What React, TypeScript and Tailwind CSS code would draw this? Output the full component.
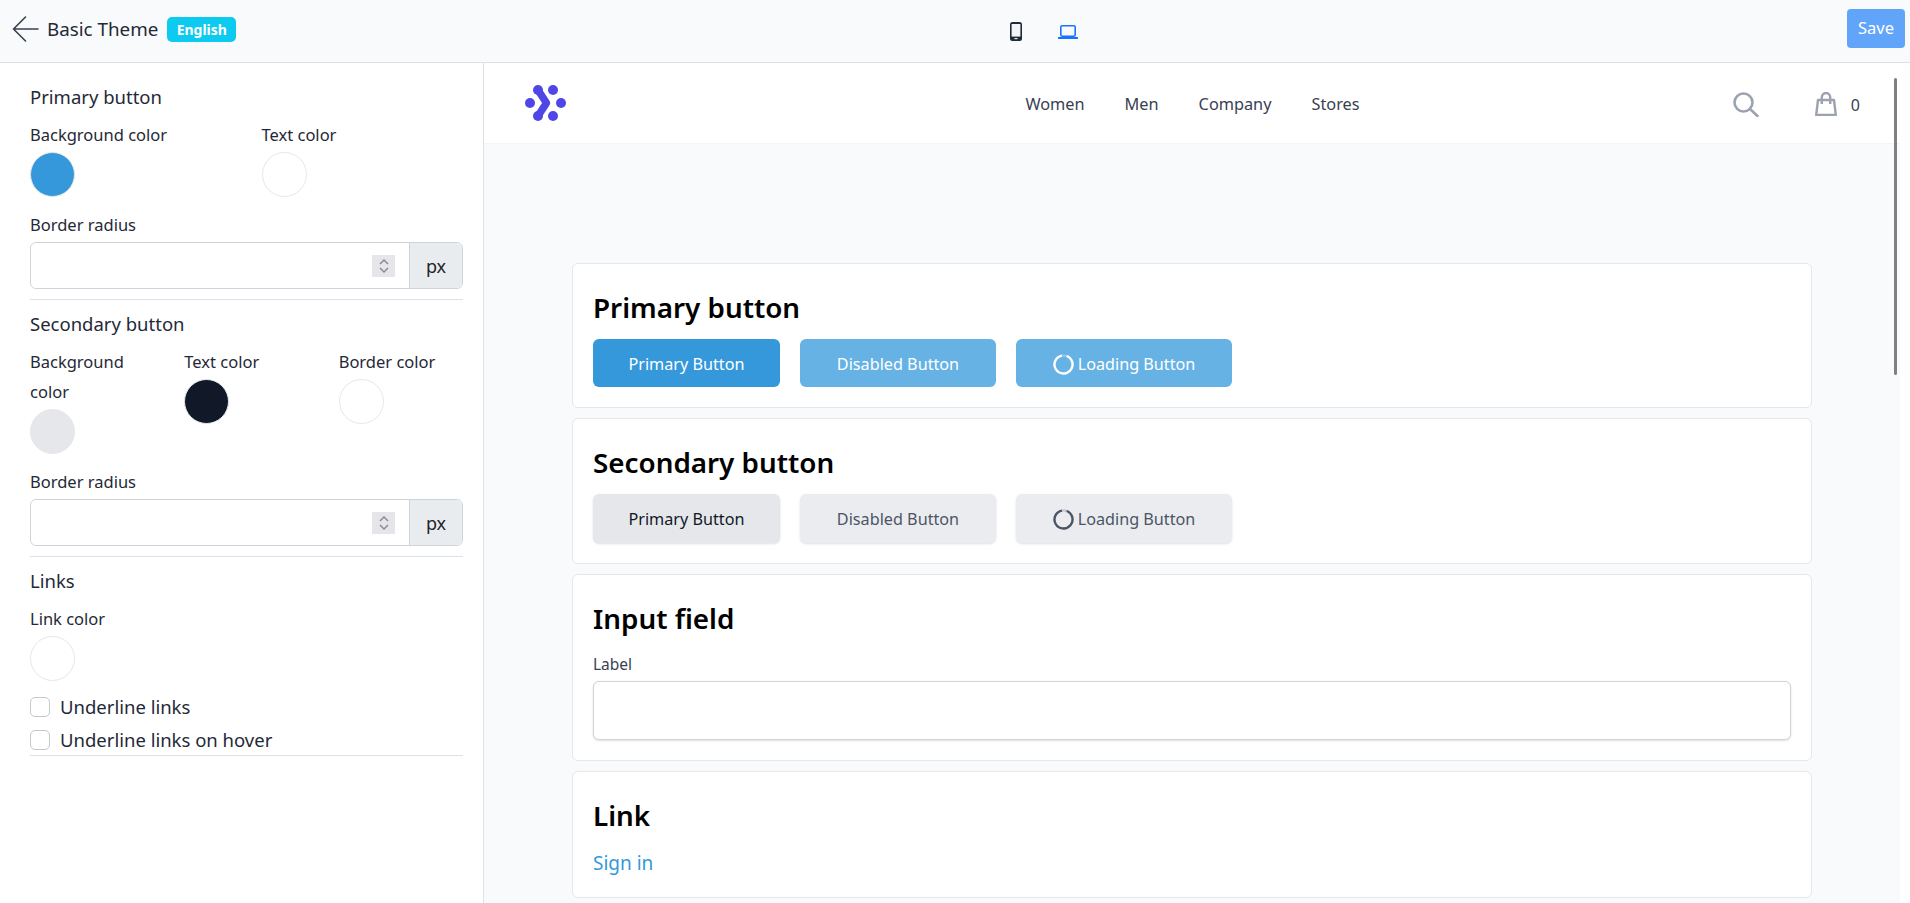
const fontStack = 'font-["Noto_Sans",sans-serif]'

function BackArrow() {
  return (
    <svg width="27" height="26" viewBox="0 0 27 26" fill="none" stroke="#374151" strokeWidth="1.6" strokeLinecap="round" strokeLinejoin="round">
      <path d="M26 13H1.5M13.5 1 1.5 13l12 12" />
    </svg>
  )
}

function PhoneIcon() {
  return (
    <svg width="12" height="19" viewBox="0 0 12 19">
      <rect x="0" y="0" width="12" height="19" rx="2.5" fill="#1f2937" />
      <rect x="1.6" y="2" width="8.8" height="12.6" fill="#f3f4f6" />
      <rect x="4.4" y="16" width="3.2" height="1.2" fill="#e5e7eb" />
    </svg>
  )
}

function LaptopIcon() {
  return (
    <svg width="20" height="14" viewBox="0 0 20 14" fill="none">
      <rect x="2.8" y="0.8" width="14.4" height="10.4" rx="1.4" stroke="#1a73ff" strokeWidth="1.6" />
      <rect x="0" y="12" width="20" height="2" fill="#1a73ff" />
    </svg>
  )
}

function Logo() {
  return (
    <svg width="42" height="38" viewBox="0 0 42 38" fill="#4f46e5">
      <circle cx="5" cy="19" r="5" />
      <circle cx="28" cy="6" r="5" />
      <circle cx="36" cy="19" r="5" />
      <circle cx="28" cy="32" r="5" />
      <circle cx="13" cy="6" r="5" />
      <circle cx="13" cy="32" r="5" />
      <path d="M13 6 21.5 19 13 32" fill="none" stroke="#4f46e5" strokeWidth="7.5" strokeLinejoin="round" />
    </svg>
  )
}

function SearchIcon() {
  return (
    <svg width="26" height="25" viewBox="0 0 26 25" fill="none" stroke="#9ca3af" strokeWidth="2.6" strokeLinecap="round">
      <circle cx="10.5" cy="10.5" r="9" />
      <path d="M17 17l7.5 7" />
    </svg>
  )
}

function BagIcon() {
  return (
    <svg width="22" height="24" viewBox="0 0 22 24" fill="none" stroke="#9ca3af" strokeWidth="2.4" strokeLinejoin="round">
      <path d="M3 8h16l1.8 15H1.2z" />
      <path d="M6.8 12V5.2a4.2 4.2 0 0 1 8.4 0V12" />
    </svg>
  )
}

function Spinner({ color }: { color: string }) {
  return (
    <svg width="21" height="21" viewBox="0 0 20 20" fill="none" strokeWidth="2.2">
      <circle cx="10" cy="10" r="8.6" stroke={color} opacity="0.25" />
      <path d="M13 1.9A8.6 8.6 0 1 1 8.5 1.5" stroke={color} />
    </svg>
  )
}

function Swatch({ color }: { color: string }) {
  return <div className="h-[45px] w-[45px] rounded-full border border-[#e5e7eb]" style={{ background: color }} />
}

function ColorField({ label, color }: { label: string; color: string }) {
  return (
    <div>
      <div className="text-[16.5px] leading-[30px] text-[#1f2937]">{label}</div>
      <div className="mt-[2px]">
        <Swatch color={color} />
      </div>
    </div>
  )
}

function RadiusField() {
  return (
    <div>
      <div className="text-[16.5px] leading-[30px] text-[#1f2937]">Border radius</div>
      <div className="mt-[2px] flex h-[47px] rounded-md border border-[#ced4da]">
        <div className="relative flex-1">
          <input type="text" className="h-full w-full rounded-l-md bg-white px-3 outline-none" />
          <div className="absolute left-[341px] top-[12px] flex h-[22px] w-[23px] items-center justify-center bg-[#e5e5ea]">
            <svg width="12" height="16" viewBox="0 0 12 16" fill="none" stroke="#8a8a92" strokeWidth="1.5">
              <path d="M2 6l4-4 4 4M2 10l4 4 4-4" />
            </svg>
          </div>
        </div>
        <div className="flex w-[53px] items-center justify-center rounded-r-md border-l border-[#ced4da] bg-[#e9ecef] pt-[2px] text-[18px] text-[#212529]">px</div>
      </div>
    </div>
  )
}

function Check({ label }: { label: string }) {
  return (
    <label className="flex h-[32.5px] items-center gap-[10px] text-[18.5px] text-[#1f2937]">
      <input type="checkbox" className="h-[20px] w-[20px] appearance-none rounded-[5px] border border-[#c4c8cf] bg-white" />
      {label}
    </label>
  )
}

function Sidebar() {
  return (
    <aside className="w-[484px] shrink-0 border-r border-[#dee2e6] bg-white pl-[30px] pr-[20px] pt-[19px]">
      <h3 className="text-[18.5px] leading-[30px] text-[#1f2937]">Primary button</h3>
      <div className="mt-[8px] grid grid-cols-2 gap-x-[30px]">
        <ColorField label="Background color" color="#3498db" />
        <ColorField label="Text color" color="#ffffff" />
      </div>
      <div className="mt-[13px]">
        <RadiusField />
      </div>
      <hr className="mt-[10px] border-[#dee2e6]" />

      <h3 className="mt-[9px] text-[18.5px] leading-[30px] text-[#1f2937]">Secondary button</h3>
      <div className="mt-[8px] grid grid-cols-3 gap-x-[30px]">
        <ColorField label="Background color" color="#e5e7eb" />
        <ColorField label="Text color" color="#111827" />
        <ColorField label="Border color" color="#ffffff" />
      </div>
      <div className="mt-[13px]">
        <RadiusField />
      </div>
      <hr className="mt-[10px] border-[#dee2e6]" />

      <h3 className="mt-[9px] text-[18.5px] leading-[30px] text-[#1f2937]">Links</h3>
      <div className="mt-[8px]">
        <ColorField label="Link color" color="#ffffff" />
      </div>
      <div className="mt-[10px]">
        <Check label="Underline links" />
        <Check label="Underline links on hover" />
      </div>
      <hr className="mt-[-1px] border-[#dee2e6]" />
    </aside>
  )
}

function Card({ title, children }: { title: string; children: React.ReactNode }) {
  return (
    <section className="rounded-md border border-[#e5e7eb] bg-white px-5 pb-5 pt-[24px]">
      <h2 className="text-[27.8px] font-semibold leading-[38px] text-black">{title}</h2>
      {children}
    </section>
  )
}

function ButtonRow({ secondary }: { secondary?: boolean }) {
  const base = secondary
    ? 'bg-[#e5e7eb] text-[#111827] shadow-sm h-[49px]'
    : 'bg-[#3498db] text-white h-[48px]'
  const faded = secondary
    ? 'bg-[#ebecf0] text-[#4b5563] shadow-sm h-[49px]'
    : 'bg-[#67b2e4] text-white h-[48px]'
  return (
    <div className="mt-[13px] flex gap-5 text-[16.2px]">
      <button className={`flex w-[187px] items-center justify-center rounded-md pt-[2px] ${base}`}>Primary Button</button>
      <button className={`flex w-[196px] items-center justify-center rounded-md pt-[2px] ${faded}`}>Disabled Button</button>
      <button className={`flex w-[216px] items-center justify-center gap-[4px] rounded-md pt-[2px] ${faded}`}>
        <Spinner color={secondary ? '#4b5563' : '#ffffff'} />
        Loading Button
      </button>
    </div>
  )
}

function StoreNav() {
  return (
    <nav className="relative flex h-[81px] items-center justify-center border-b border-[#f3f4f6] bg-white">
      <div className="absolute left-[41px] top-[21px]">
        <Logo />
      </div>
      <div className="ml-[1px] mt-[2px] flex gap-10 text-[16.3px] text-[#374151]">
        <span>Women</span>
        <span>Men</span>
        <span>Company</span>
        <span>Stores</span>
      </div>
      <div className="absolute right-[40px] top-[28px] flex items-center">
        <SearchIcon />
        <div className="ml-[56px]">
          <BagIcon />
        </div>
        <span className="ml-[14px] mt-[2px] text-[16px] text-[#374151]">0</span>
      </div>
    </nav>
  )
}

export default function App() {
  return (
    <div className={`flex h-screen flex-col overflow-hidden bg-white ${fontStack}`}>
      <header className="relative flex h-[63px] shrink-0 items-center justify-between border-b border-[#dee2e6] bg-[#f9fafb] pl-[12px] pr-[5px]">
        <div className="mb-[4px] flex items-center">
          <BackArrow />
          <span className="ml-[8px] text-[18.8px] text-[#1f2937]">Basic Theme</span>
          <span className="ml-[9px] flex h-[25px] w-[69px] items-center justify-center rounded-[5px] bg-[#0dcaf0] text-[14px] font-bold text-white">English</span>
        </div>
        <div className="absolute left-[1010px] top-[22px] flex items-start gap-[36px]">
          <PhoneIcon />
          <div className="mt-[3px]">
            <LaptopIcon />
          </div>
        </div>
        <button className="mb-[5px] h-[39px] w-[58px] rounded-[4px] bg-[#60a5fa] text-[16.5px] text-white">Save</button>
      </header>

      <div className="flex min-h-0 flex-1">
        <Sidebar />
        <div className="relative min-w-0 flex-1 overflow-hidden bg-[#f9fafb]">
          <StoreNav />
          <main className="flex flex-col gap-[10px] pl-[88px] pr-[88px] pt-[119px]">
            <Card title="Primary button">
              <ButtonRow />
            </Card>
            <Card title="Secondary button">
              <ButtonRow secondary />
            </Card>
            <Card title="Input field">
              <label className="mt-[15px] block text-[15.5px] leading-[24px] text-[#374151]">Label</label>
              <input type="text" className="mt-[5px] block h-[59px] w-full rounded-md border border-[#d1d5db] bg-white shadow-sm" />
            </Card>
            <Card title="Link">
              <a href="#" className="mt-[15px] block text-[19px] leading-[28px] text-[#3498db]">Sign in</a>
            </Card>
          </main>
          <div className="absolute right-[3px] top-[15px] h-[297px] w-[3px] rounded-full bg-[#808080]" />
        </div>
        <div className="w-[10px] shrink-0 bg-white" />
      </div>
    </div>
  )
}
